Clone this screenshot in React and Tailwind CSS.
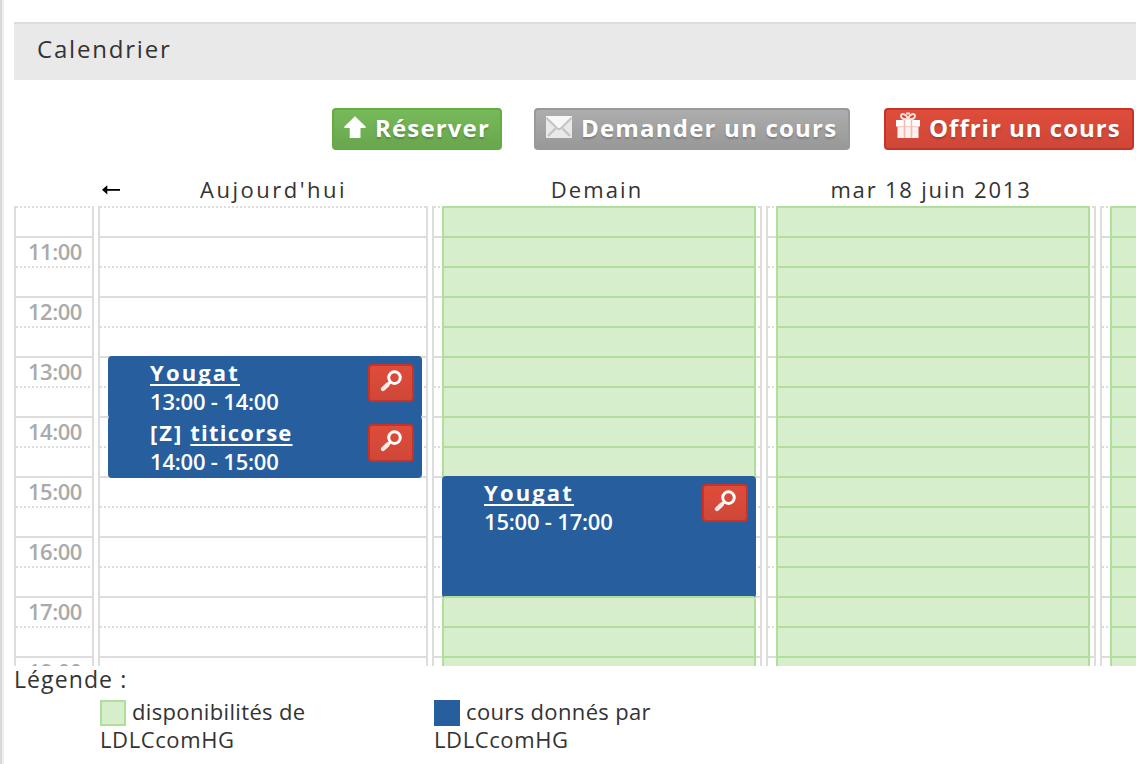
const HALF_HOURS = Array.from({ length: 16 }, (_, i) => i);
const DOTTED =
  "bg-[repeating-linear-gradient(to_right,#dddddd_0px,#dddddd_2px,transparent_2px,transparent_4px)]";

function Slot({ index, label }) {
  const solid = index % 2 === 1;
  return (
    <div className="h-[30px] shrink-0">
      <div className={"h-[2px] " + (solid ? "bg-[#dddddd]" : DOTTED)} />
      {label && (
        <div className="pl-3 text-[22px] font-semibold leading-[26px] tracking-[-0.5px] text-[#aaaaaa]">{label}</div>
      )}
    </div>
  );
}

function TimeColumn() {
  return (
    <div className="h-full w-20 shrink-0 overflow-hidden border-x-2 border-[#dddddd]">
      {HALF_HOURS.map((i) => (
        <Slot key={i} index={i} label={i % 2 === 1 ? `${11 + (i - 1) / 2}:00` : null} />
      ))}
    </div>
  );
}

function DayColumn({ children }) {
  return (
    <div className="relative h-full w-[330px] shrink-0 overflow-hidden border-x-2 border-[#dddddd]">
      {HALF_HOURS.map((i) => (
        <Slot key={i} index={i} />
      ))}
      {children}
    </div>
  );
}

function Available({ className, count }) {
  return (
    <div className={"absolute left-2 w-[314px] overflow-hidden border-x-2 border-[#b0df9b] bg-[#d6eecb] " + className}>
      {HALF_HOURS.slice(0, count).map((i) => (
        <div key={i} className="h-[30px] border-t-2 border-[#b0df9b]" />
      ))}
    </div>
  );
}

function Lesson({ className, prefix, name, nameClass, time }) {
  return (
    <div className={"absolute left-2 flex w-[314px] items-start justify-between rounded-[4px] bg-[#265e9e] pl-[42px] pr-2 text-[22px] font-bold leading-[29px] text-white " + className}>
      <div className="pt-[2px]">
        <div className="flex gap-[7px]">
          {prefix && <span className="tracking-[2px]">{prefix}</span>}
          <a href="#" className={"underline decoration-2 underline-offset-[3px] [text-decoration-skip-ink:none] " + nameClass}>{name}</a>
        </div>
        <div className="font-semibold tracking-[-0.2px]">{time}</div>
      </div>
      <button className="mt-2 h-[38px] w-[46px] rounded-[4px] border-2 border-[#c73229] bg-linear-to-b from-[#df4c3a] to-[#cf4738]">
        <svg viewBox="2 2 42 34" className="block h-[34px] w-[42px]" fill="none" stroke="#fff" strokeLinecap="round">
          <circle cx="26.5" cy="13.6" r="5.8" strokeWidth="3" />
          <path d="M22.3 18 L20.3 20" strokeWidth="2.8" />
          <path d="M19.6 20.6 L15 25" strokeWidth="4.4" stroke="#fbeae8" />
        </svg>
      </button>
    </div>
  );
}

function ActionButton({ className, icon, children }) {
  return (
    <button className={"flex h-[42px] items-start rounded-[4px] border-2 bg-linear-to-b text-left text-[24px] font-bold leading-[35px] whitespace-nowrap text-white [text-shadow:0_2px_2px_rgba(0,0,0,0.2)] " + className}>
      {icon}
      <span>{children}</span>
    </button>
  );
}

function UpIcon() {
  return (
    <svg viewBox="0 0 22 22" className="mt-[6px] h-[22px] w-[22px] shrink-0" fill="#fff">
      <path d="M11 0.3 L21.6 10.5 V12 H16.5 V22 H5.7 V12 H0.4 V10.5 Z" />
    </svg>
  );
}

function MailIcon() {
  return (
    <svg viewBox="0 0 26 22" className="mt-[6px] h-[22px] w-[26px] shrink-0">
      <rect width="26" height="22" fill="#e9e9e9" />
      <path d="M0 0 H26 L13 13 Z" fill="#f7f7f7" />
      <path d="M0.5 2 L11 12.3 Q13 14 15 12.3 L25.5 2" fill="none" stroke="#c4c4c4" strokeWidth="2" />
      <path d="M2 20 L9.5 12.5 M24 20 L16.5 12.5" stroke="#c4c4c4" strokeWidth="2.4" />
    </svg>
  );
}

function GiftIcon() {
  return (
    <svg viewBox="0 0 24 26" className="mt-[2px] h-[26px] w-6 shrink-0">
      <path d="M12 7.5 C9 7.5 5 6.5 5 4 C5 1 10 1 12 7 C14 1 19 1 19 4 C19 6.5 15 7.5 12 7.5 Z" fill="none" stroke="#fbe3e0" strokeWidth="2" />
      <path d="M10 1.5 H14" stroke="#fbe3e0" strokeWidth="2" />
      <rect y="8" width="24" height="6.5" fill="#fff" />
      <rect x="1.5" y="14" width="21" height="12" fill="#fdf1ef" />
      <path d="M2 14.7 H22" stroke="#f4c4bf" strokeWidth="1" />
      <path d="M8.5 8 V26 M15.5 8 V26" stroke="#f2bab3" strokeWidth="1.6" />
    </svg>
  );
}

function LegendItem({ swatch, label }) {
  return (
    <div className="w-[334px] text-[22px] leading-[28px] text-[#333333]">
      <div className="flex items-start gap-[6px]">
        <span className={"mt-[2px] h-[26px] w-[26px] " + swatch} />
        <span className="-mt-px tracking-[0.35px]">{label}</span>
      </div>
      <div className="-mt-px tracking-[0.6px]">LDLCcomHG</div>
    </div>
  );
}

export default function App() {
  return (
    <div className="flex h-[764px] w-[1136px] overflow-hidden bg-white font-['Open_Sans','Noto_Sans',sans-serif] text-[#333333]">
      <div className="w-1 shrink-0 border-l-2 border-[#d9d9d9] bg-[#eeeeee]" />
      <main className="ml-[10px] w-[1122px] shrink-0 overflow-hidden pt-[22px]">
        <h1 className="h-[58px] border-t-2 border-[#dddddd] bg-[#e9e9e9] pl-[23px] text-[24px] font-medium leading-[50px] tracking-[1.8px]">
          Calendrier
        </h1>

        <div className="mt-7 flex pl-[318px]">
          <ActionButton className="w-[170px] shrink-0 gap-[9px] border-[#65ab44] from-[#77ba59] to-[#69a64e] pl-[10px] tracking-[1.15px]" icon={<UpIcon />}>
            Réserver
          </ActionButton>
          <ActionButton className="ml-8 w-[316px] shrink-0 gap-[9px] border-[#999999] from-[#adadad] to-[#989898] pl-[10px] tracking-[1.2px]" icon={<MailIcon />}>
            Demander un cours
          </ActionButton>
          <ActionButton className="ml-[34px] w-[250px] shrink-0 gap-[9px] border-[#c73229] from-[#df4c3a] to-[#cf4738] pl-[10px] tracking-[1px]" icon={<GiftIcon />}>
            Offrir un cours
          </ActionButton>
        </div>

        <div className="mt-6 flex h-8 w-[1200px] text-center text-[22px] font-medium leading-[30px]">
          <div className="flex w-[84px] shrink-0" />
          <div className="flex w-[334px] shrink-0 items-start">
            <svg viewBox="0 0 20 12" className="ml-1 mt-[10px] h-3 w-5 shrink-0" fill="#000">
              <path d="M0 5.8 L5.3 1.2 V10.4 Z" />
              <rect x="5" y="5" width="13" height="1.8" />
            </svg>
            <div className="pl-[78px] tracking-[2.5px]">Aujourd'hui</div>
          </div>
          <div className="w-[334px] shrink-0 pr-[4px] tracking-[2.1px]">Demain</div>
          <div className="w-[334px] shrink-0 pr-[4px] tracking-[1.8px]">mar 18 juin 2013</div>
        </div>

        <div className="flex h-[460px] w-[1420px] gap-1 overflow-hidden">
          <TimeColumn />
          <DayColumn>
            <Lesson className="top-[150px] h-[62px]" name="Yougat" nameClass="tracking-[2.15px]" time="13:00 - 14:00" />
            <Lesson className="top-[210px] h-[62px]" prefix="[Z]" name="titicorse" nameClass="tracking-[1.2px]" time="14:00 - 15:00" />
          </DayColumn>
          <DayColumn>
            <Available className="top-0 h-[272px]" count={9} />
            <Lesson className="top-[270px] h-[122px]" name="Yougat" nameClass="tracking-[2.15px]" time="15:00 - 17:00" />
            <Available className="top-[390px] h-[80px] rounded-t-[4px]" count={3} />
          </DayColumn>
          <DayColumn>
            <Available className="top-0 h-[480px]" count={16} />
          </DayColumn>
          <DayColumn>
            <Available className="top-0 h-[480px]" count={16} />
          </DayColumn>
        </div>

        <div className="text-[23px] leading-[26px] tracking-[1.1px]">Légende :</div>
        <div className="mt-[6px] flex pl-[86px]">
          <LegendItem swatch="border-2 border-[#b0df9b] bg-[#d6eecb]" label="disponibilités de" />
          <LegendItem swatch="bg-[#265e9e]" label="cours donnés par" />
        </div>
      </main>
    </div>
  );
}
